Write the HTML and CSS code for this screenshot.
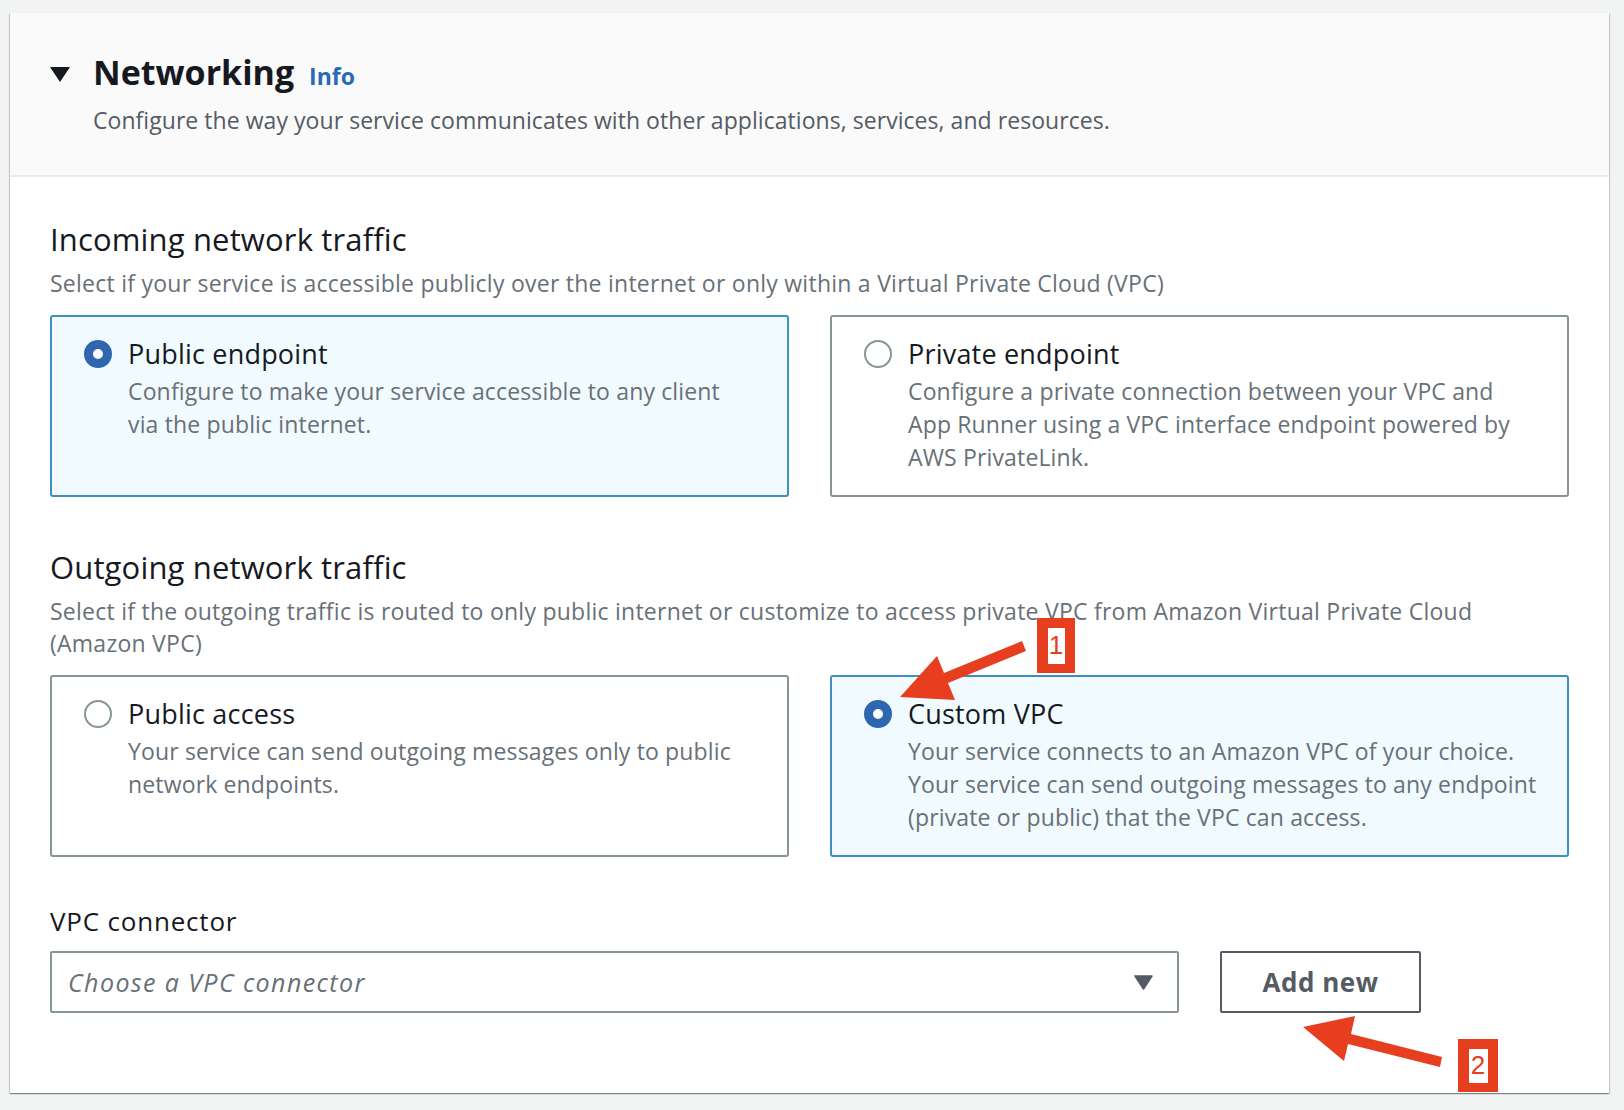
FILE: index.html
```html
<!DOCTYPE html>
<html lang="en">
<head>
<meta charset="utf-8">
<title>Networking</title>
<link rel="stylesheet" href="styles.css">
</head>
<body>
<div class="page">
  <section class="container">
    <header class="container-header">
      <div class="title-row">
        <svg class="expand-caret" width="20" height="15" viewBox="0 0 20 15"><polygon points="0,0 20,0 10,15" fill="#16191f"/></svg>
        <h2 class="title">Networking<a class="info">Info</a></h2>
      </div>
      <p class="header-desc">Configure the way your service communicates with other applications, services, and resources.</p>
    </header>
    <div class="container-body">
      <div class="field">
        <h3 class="field-title">Incoming network traffic</h3>
        <p class="field-desc">Select if your service is accessible publicly over the internet or only within a Virtual Private Cloud (VPC)</p>
        <div class="tiles">
          <div class="tile selected">
            <span class="radio checked"></span>
            <div class="tile-text">
              <div class="tile-title">Public endpoint</div>
              <div class="tile-desc">Configure to make your service accessible to any client<br>via the public internet.</div>
            </div>
          </div>
          <div class="tile">
            <span class="radio"></span>
            <div class="tile-text">
              <div class="tile-title">Private endpoint</div>
              <div class="tile-desc">Configure a private connection between your VPC and<br>App Runner using a VPC interface endpoint powered by<br>AWS PrivateLink.</div>
            </div>
          </div>
        </div>
      </div>
      <div class="field">
        <h3 class="field-title">Outgoing network traffic</h3>
        <p class="field-desc">Select if the outgoing traffic is routed to only public internet or customize to access private VPC from Amazon Virtual Private Cloud<br>(Amazon VPC)</p>
        <div class="tiles">
          <div class="tile">
            <span class="radio"></span>
            <div class="tile-text">
              <div class="tile-title">Public access</div>
              <div class="tile-desc">Your service can send outgoing messages only to public<br>network endpoints.</div>
            </div>
          </div>
          <div class="tile selected">
            <span class="radio checked"></span>
            <div class="tile-text">
              <div class="tile-title">Custom VPC</div>
              <div class="tile-desc">Your service connects to an Amazon VPC of your choice.<br>Your service can send outgoing messages to any endpoint<br>(private or public) that the VPC can access.</div>
            </div>
          </div>
        </div>
      </div>
      <div class="field vpc-field">
        <div class="field-label">VPC connector</div>
        <div class="select-row">
          <div class="select">
            <span class="placeholder">Choose a VPC connector</span>
            <svg class="select-caret" width="19" height="15" viewBox="0 0 19 15"><polygon points="1,1 18,1 9.5,14" fill="#545b64" stroke="#545b64" stroke-width="1.5" stroke-linejoin="round"/></svg>
          </div>
          <button class="btn">Add new</button>
        </div>
      </div>
    </div>
  </section>
</div>

<div class="annotations">
  <svg class="arrows" width="1624" height="1110" viewBox="0 0 1624 1110">
    <polygon fill="#e63e1f" points="1022,641 944,673 937,656 900,697 955,700 948,683 1026,651"/>
    <polygon fill="#e63e1f" points="1303,1027 1355,1016 1351,1034 1442,1057 1440,1067 1348,1044 1344,1061"/>
  </svg>
  <div class="marker marker-1"><span>1</span></div>
  <div class="marker marker-2"><span>2</span></div>
</div>
</body>
</html>
```

FILE: styles.css
```css
* { box-sizing: border-box; }

body {
  margin: 0;
  background: #f2f3f3;
  font-family: "Open Sans", "Noto Sans", sans-serif;
  color: #16191f;
}

.page {
  padding: 13px 15px 17px 10px;
}

.container {
  background: #ffffff;
  box-shadow: 0 1px 1px 0 rgba(0, 28, 36, 0.3), 1px 1px 1px 0 rgba(0, 28, 36, 0.15), -1px 1px 1px 0 rgba(0, 28, 36, 0.15);
}

.container-header {
  background: #fafafa;
  border-bottom: 2px solid #eaeded;
  padding: 39px 40px 39px;
}

.title-row {
  display: flex;
  align-items: center;
  gap: 23px;
  height: 44px;
}

.expand-caret {
  flex: none;
  display: block;
}

.title {
  margin: 0;
  font-size: 34px;
  line-height: 44px;
  font-weight: 700;
  color: #16191f;
}

.info {
  margin-left: 15px;
  font-size: 23px;
  font-weight: 700;
  color: #2a6ab4;
}

.header-desc {
  margin: 8px 0 0 43px;
  font-size: 23px;
  line-height: 32px;
  letter-spacing: 0.05px;
  color: #545b64;
}

.container-body {
  padding: 43px 40px 80px;
}

.field + .field {
  margin-top: 51px;
}

.field-title {
  margin: 0;
  font-size: 31px;
  line-height: 38px;
  font-weight: 400;
  letter-spacing: 0.15px;
  color: #16191f;
}

.field-desc {
  margin: 9px 0 0;
  font-size: 23px;
  line-height: 32px;
  letter-spacing: 0.25px;
  color: #687078;
}

.tiles {
  margin-top: 16px;
  display: grid;
  grid-template-columns: 1fr 1fr;
  gap: 41px;
}

.tile {
  display: flex;
  gap: 16px;
  border: 2px solid #879596;
  border-radius: 3px;
  padding: 19px 16px 21px 32px;
  background: #ffffff;
}

.tile.selected {
  border-color: #3f8fc2;
  background: #f1faff;
}

.radio {
  flex: none;
  width: 28px;
  height: 28px;
  margin-top: 4px;
  border-radius: 50%;
  border: 2px solid #879596;
  background: #ffffff;
}

.radio.checked {
  border: 9px solid #2e67b0;
}

.tile-text {
  min-width: 0;
}

.tile-title {
  font-size: 27px;
  line-height: 36px;
  letter-spacing: 0.2px;
  color: #16191f;
}

.tile-desc {
  margin-top: 3px;
  font-size: 23px;
  line-height: 33px;
  letter-spacing: 0.15px;
  color: #687078;
  white-space: nowrap;
}

.vpc-field {
  margin-top: 48px !important;
}

.field-label {
  font-size: 26px;
  line-height: 32px;
  letter-spacing: 0.8px;
  color: #16191f;
}

.select-row {
  margin-top: 14px;
  display: flex;
  gap: 41px;
}

.select {
  flex: 0 0 1129px;
  height: 62px;
  border: 2px solid #879596;
  border-radius: 2px;
  display: flex;
  align-items: center;
  justify-content: space-between;
  padding: 0 24px 0 16px;
  background: #ffffff;
}

.placeholder {
  font-size: 25px;
  font-style: italic;
  letter-spacing: 1.4px;
  color: #687078;
}

.select-caret {
  display: block;
}

.btn {
  flex: 0 0 201px;
  height: 62px;
  border: 2px solid #545b64;
  border-radius: 2px;
  background: #ffffff;
  font-family: inherit;
  font-size: 26px;
  font-weight: 700;
  letter-spacing: 0.5px;
  color: #545b64;
  padding: 0;
}

.annotations {
  position: absolute;
  left: 0;
  top: 0;
  width: 1624px;
  height: 1110px;
  pointer-events: none;
}

.arrows {
  position: absolute;
  left: 0;
  top: 0;
}

.marker {
  position: absolute;
  background: #e63e1f;
  display: flex;
  align-items: center;
  justify-content: center;
}

.marker span {
  background: #ffffff;
  color: #e63e1f;
  font-family: "Liberation Sans", Arial, sans-serif;
  font-size: 26px;
  display: flex;
  align-items: center;
  justify-content: center;
}

.marker-1 {
  left: 1037px;
  top: 618px;
  width: 38px;
  height: 55px;
}

.marker-1 span {
  width: 17px;
  height: 36px;
}

.marker-2 {
  left: 1458px;
  top: 1039px;
  width: 40px;
  height: 53px;
}

.marker-2 span {
  width: 19px;
  height: 34px;
}
```
